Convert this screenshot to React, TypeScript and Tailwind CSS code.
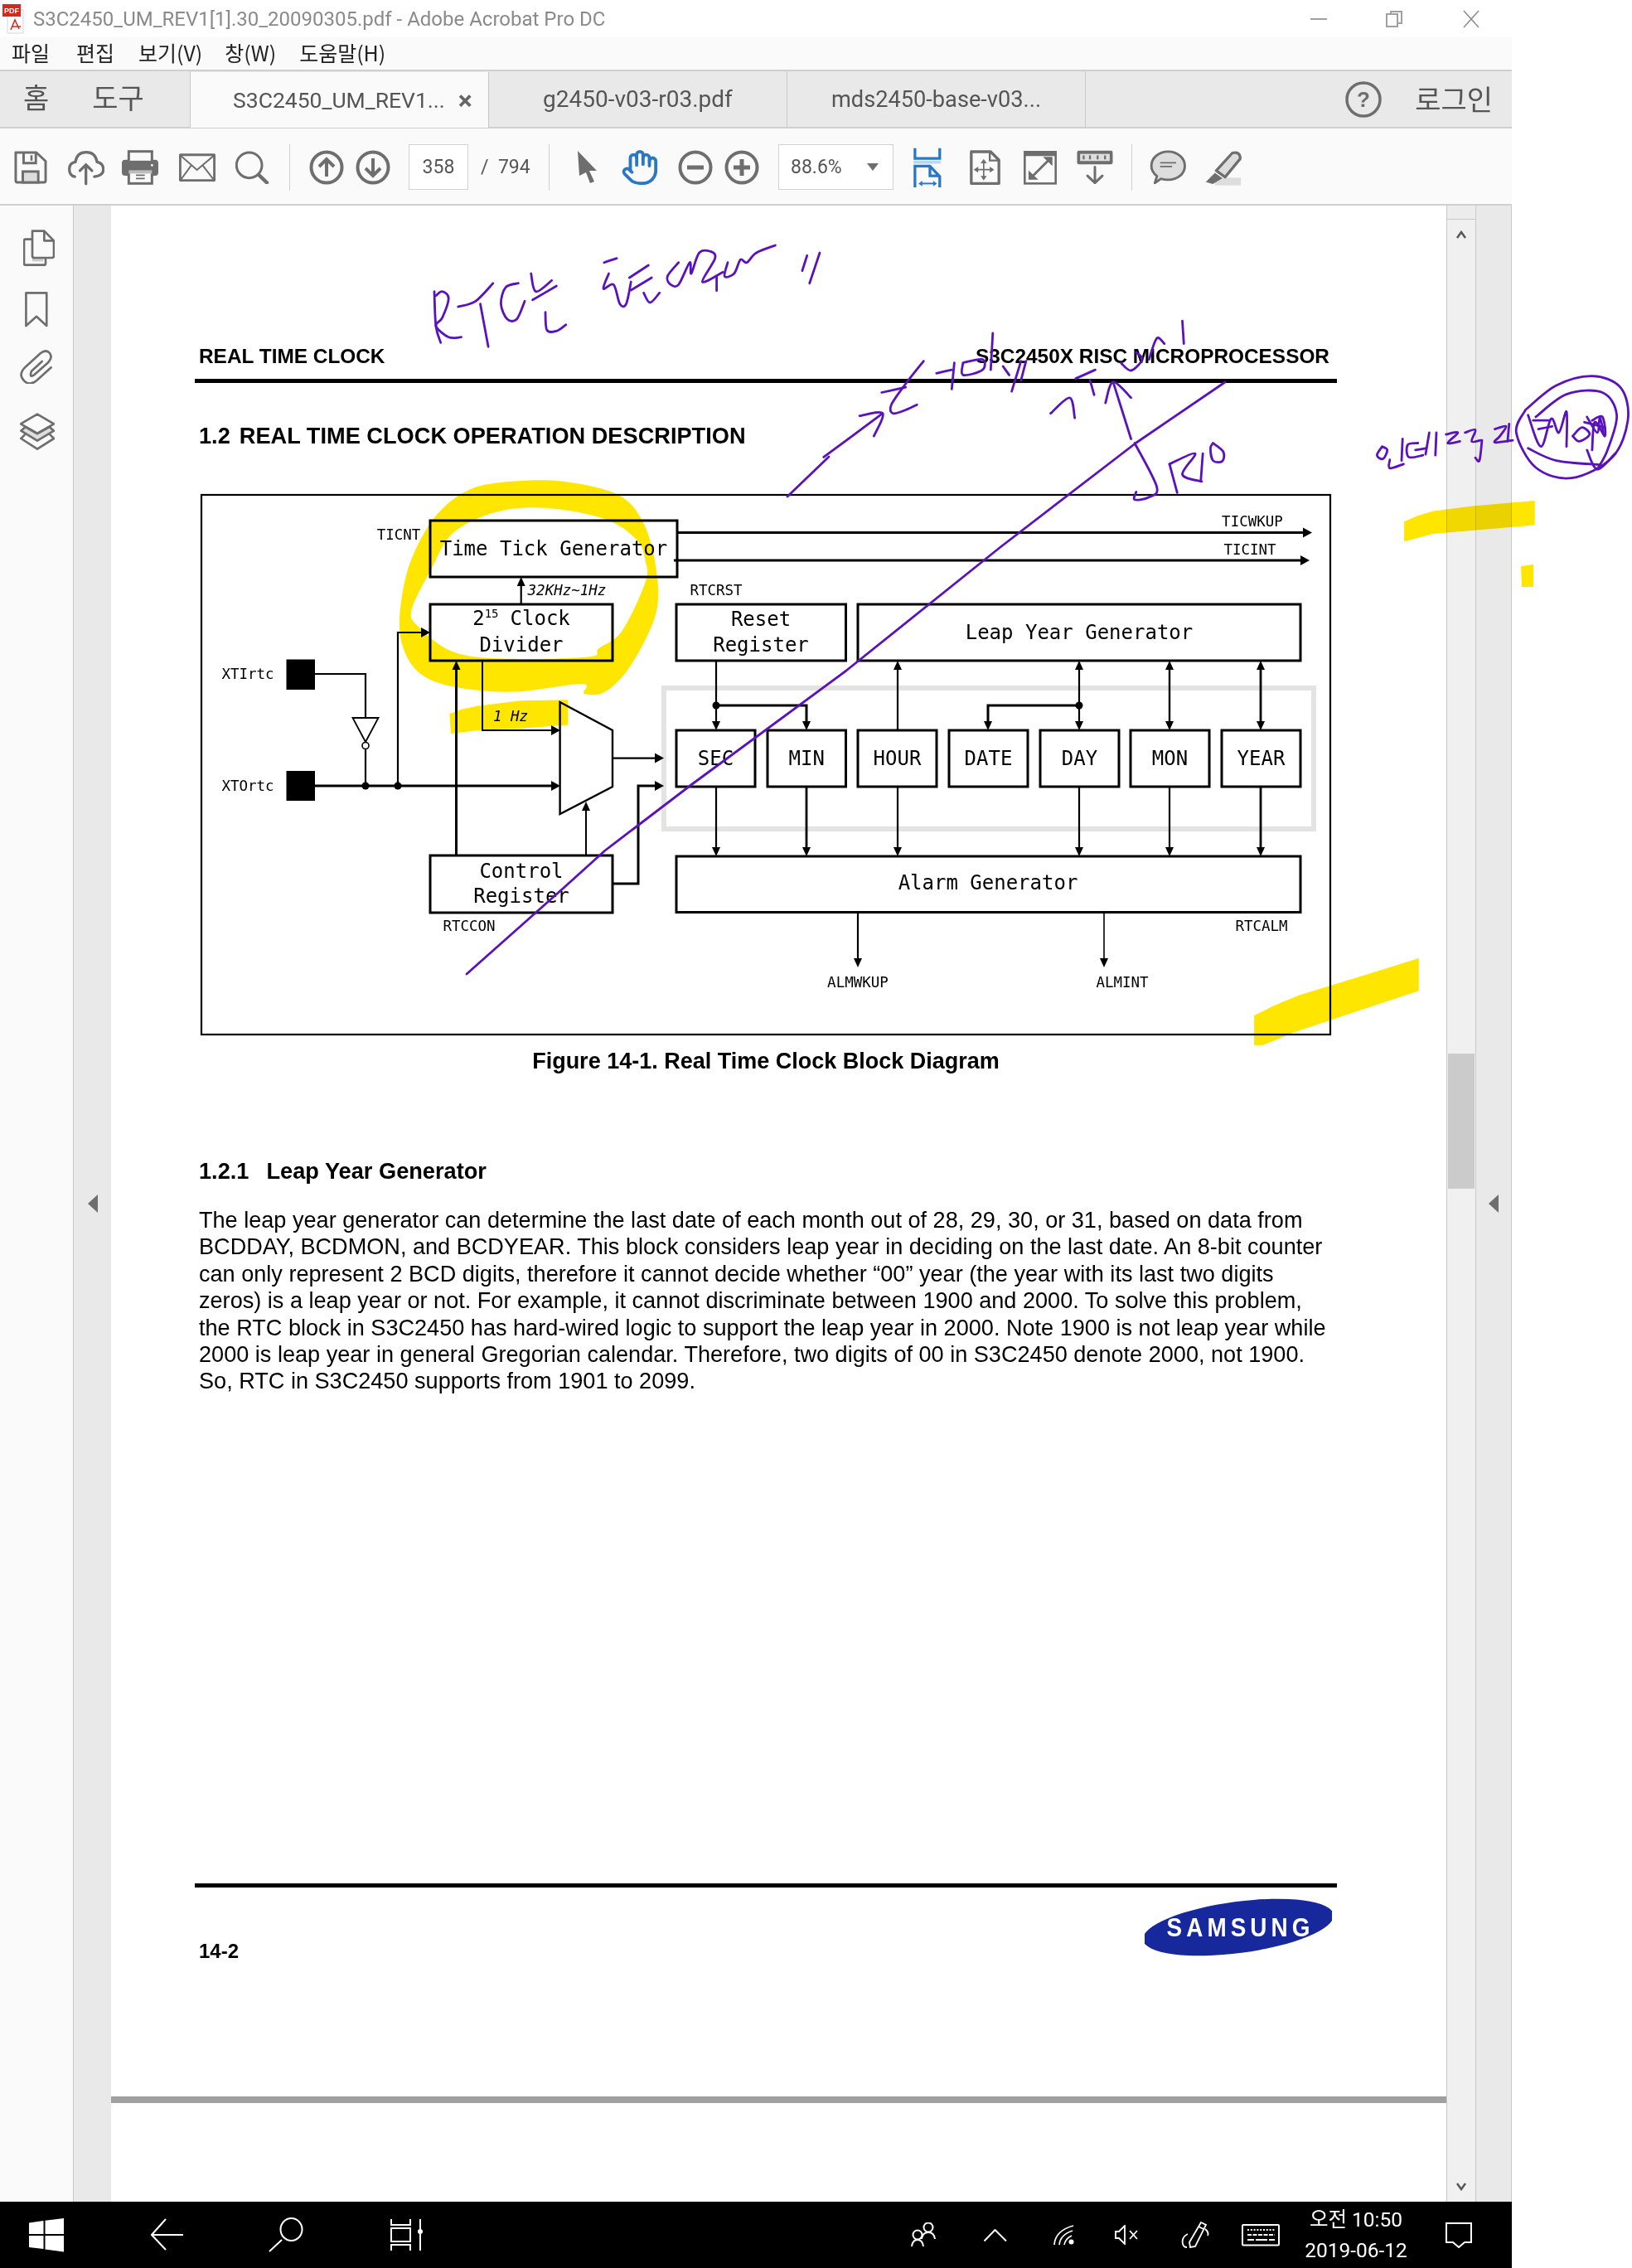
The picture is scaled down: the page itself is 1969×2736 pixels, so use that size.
import React from "react";
import { Hand } from "lucide-react";

type P = number[];
const smooth = (pts: P[], closed = false) => {
  const n = pts.length;
  const at = (i: number) => (closed ? pts[(i + n) % n] : pts[Math.max(0, Math.min(n - 1, i))]);
  let d = `M${pts[0][0].toFixed(1)} ${pts[0][1].toFixed(1)}`;
  const last = closed ? n : n - 1;
  for (let i = 0; i < last; i++) {
    const p0 = at(i - 1), p1 = at(i), p2 = at(i + 1), p3 = at(i + 2);
    const c1 = [p1[0] + (p2[0] - p0[0]) / 6, p1[1] + (p2[1] - p0[1]) / 6];
    const c2 = [p2[0] - (p3[0] - p1[0]) / 6, p2[1] - (p3[1] - p1[1]) / 6];
    d += `C${c1[0].toFixed(1)} ${c1[1].toFixed(1)} ${c2[0].toFixed(1)} ${c2[1].toFixed(1)} ${p2[0].toFixed(1)} ${p2[1].toFixed(1)}`;
  }
  return closed ? d + "Z" : d;
};
const poly = (pts: P[]) => "M" + pts.map((p) => p.map((v) => v.toFixed(1)).join(" ")).join("L") + "Z";
const z2 = (p: P): P => [1000 + p[0] / 1.618, p[1] / 2.376];
const z3 = (p: P): P => [220 + p[0] / 1.96, 580 + p[1] / 2.376];
const z4 = (p: P): P => [780 + p[0] / 1.6505, 580 + p[1] / 2.24];
const z9 = (p: P): P => [480 + p[0] / 2.613, 260 + p[1] / 3];

const rtcInk: P[][] = [
  [[115, 275], [120, 400], [135, 460]],
  [[120, 290], [140, 275], [160, 300], [140, 370], [120, 400], [160, 440], [200, 440]],
  [[190, 330], [245, 310], [300, 245]],
  [[260, 320], [285, 475]],
  [[380, 245], [340, 260], [325, 320], [345, 375], [375, 375], [400, 310]],
  [[420, 210], [435, 275], [485, 235]],
  [[425, 305], [500, 255]],
  [[465, 350], [470, 415], [500, 418], [530, 395]],
  [[650, 170], [690, 155]],
  [[665, 210], [648, 265], [680, 250], [700, 320], [720, 320], [735, 240]],
  [[730, 225], [790, 180]],
  [[735, 270], [800, 225]],
  [[775, 280], [795, 315], [825, 280]],
  [[885, 170], [850, 220], [860, 250], [885, 250], [920, 170], [925, 210], [950, 135], [985, 130], [1000, 155], [960, 240], [1025, 205]],
  [[1005, 220], [1005, 272]],
  [[1040, 170], [1030, 220], [1060, 210], [1080, 160], [1100, 170], [1130, 135], [1190, 108]],
  [[1290, 145], [1275, 200]],
  [[1330, 135], [1298, 245]],
];
const midInk: P[][] = [
  [[-10, 1310], [105, 1185]],
  [[60, 1192], [105, 1185], [88, 1250]],
  [[103, 1125], [150, 1110]],
  [[185, 1035], [150, 1100], [122, 1160], [125, 1185], [150, 1175], [172, 1160]],
  [[210, 1070], [240, 1060]],
  [[245, 1040], [240, 1115]],
  [[262, 1040], [262, 1075], [300, 1060], [300, 1030], [262, 1040]],
  [[320, 955], [316, 1060]],
  [[340, 1050], [352, 1075]],
  [[385, 1035], [375, 1090]],
  [[375, 1035], [357, 1122]],
  [[433, 1185], [470, 1140], [480, 1198]],
  [[482, 1085], [520, 1060]],
  [[510, 1090], [518, 1132]],
  [[540, 1155], [555, 1095], [590, 1140]],
  [[555, 1095], [590, 1258]],
  [[570, 1040], [590, 1062], [612, 1030], [600, 1010]],
  [[625, 1030], [640, 970], [655, 985]],
  [[690, 920], [693, 985]],
  [[597, 1270], [640, 1395], [625, 1425], [597, 1432], [600, 1410]],
  [[665, 1330], [680, 1412]],
  [[665, 1330], [715, 1300], [690, 1360], [728, 1380]],
  [[730, 1300], [726, 1380]],
  [[750, 1270], [770, 1295], [768, 1322], [750, 1320], [745, 1285], [750, 1270]],
  [[1080, 1280], [1070, 1305], [1082, 1315], [1090, 1290], [1080, 1280]],
  [[1120, 1258], [1118, 1320]],
  [[1095, 1318], [1095, 1342], [1122, 1330]],
  [[1150, 1270], [1130, 1275], [1132, 1310], [1160, 1305]],
  [[1145, 1290], [1165, 1285]],
  [[1172, 1240], [1165, 1302]],
  [[1186, 1240], [1184, 1305]],
  [[1205, 1245], [1228, 1240], [1208, 1270], [1232, 1265]],
  [[1242, 1240], [1262, 1232], [1255, 1265], [1272, 1262]],
  [[1275, 1262], [1270, 1320], [1262, 1312]],
  [[1300, 1230], [1322, 1222], [1310, 1250], [1300, 1268], [1335, 1262]],
  [[1328, 1215], [1325, 1265]],
  [[1360, 1175], [1420, 1105], [1490, 1078], [1545, 1110], [1560, 1200], [1530, 1310], [1450, 1370], [1380, 1340], [1342, 1240], [1360, 1175]],
  [[1380, 1195], [1440, 1130], [1510, 1125], [1538, 1190], [1520, 1290], [1500, 1345]],
  [[1365, 1285], [1420, 1320], [1505, 1332]],
  [[1365, 1190], [1390, 1280], [1410, 1200], [1425, 1240], [1440, 1180], [1440, 1280]],
  [[1375, 1205], [1405, 1205]],
  [[1385, 1230], [1412, 1222]],
  [[1452, 1250], [1470, 1225], [1485, 1245], [1465, 1265], [1452, 1250]],
  [[1490, 1205], [1510, 1195], [1515, 1250], [1495, 1210], [1490, 1290]],
  [[1475, 1210], [1515, 1225]],
  [[1480, 1195], [1500, 1240], [1505, 1195], [1512, 1240]],
  [[1480, 1290], [1500, 1345], [1535, 1300]],
];
const diagonal: P[] = [[1478, 461], [1371, 534], [1207, 660], [1021, 809], [835, 946], [730, 1026], [679, 1072], [563, 1175]];

const Yellow = () => {
  const fills = [
    [...[[950, 610], [1000, 605], [1060, 530], [1120, 380], [1120, 250], [1090, 120], [1030, 40], [900, 2], [780, 2], [680, 25], [600, 100], [540, 230], [515, 370], [520, 470], [560, 550], [640, 590], [780, 605], [945, 582]].map(z3)],
    [...[[985, 480], [1040, 430], [1095, 290], [1095, 230], [1075, 170], [1000, 110], [860, 78], [740, 90], [640, 150], [590, 250], [542, 370], [560, 420], [640, 490], [760, 510], [960, 505]].map(z3)],
  ];
  return (
    <svg width="1969" height="2736" className="absolute left-0 top-0 pointer-events-none mix-blend-multiply">
      <path d={smooth(fills[0], true) + smooth(fills[1], true)} fill="#ffe600" fillRule="evenodd" />
      <path d={poly([[632, 668], [660, 655], [700, 645], [800, 630], [912, 628], [912, 700], [800, 710], [700, 715], [635, 725]].map(z3))} fill="#ffe600" />
      <path d={poly([[1123, 1495], [1150, 1478], [1180, 1465], [1260, 1450], [1378, 1435], [1378, 1505], [1260, 1520], [1180, 1530], [1123, 1552]].map(z2))} fill="#ffe600" />
      <path d="M1835 683L1850 681V708H1836Z" fill="#ffe600" />
      <path d={poly([[1210, 1445], [1250, 1418], [1300, 1390], [1420, 1340], [1538, 1290], [1538, 1378], [1400, 1440], [1290, 1490], [1228, 1525], [1210, 1525]].map(z4))} fill="#ffe600" />
    </svg>
  );
};

const Ink = () => (
  <svg width="1969" height="2736" className="absolute left-0 top-0 pointer-events-none" fill="none" stroke="#5a12bd" strokeWidth="2.8" strokeLinecap="round" strokeLinejoin="round">
    {rtcInk.map((s, i) => <path key={i} d={smooth(s.map(z9))} />)}
    {midInk.map((s, i) => <path key={i} d={smooth(s.map(z2))} />)}
    <path d={"M" + diagonal.map((p) => p.join(" ")).join("L")} />
    <path d="M950 599L1000 551" />
  </svg>
);

/* Diagram helpers */
const Box = ({ x1, y1, x2, y2 }: { x1: number; y1: number; x2: number; y2: number }) => (
  <rect x={x1} y={y1} width={x2 - x1} height={y2 - y1} fill="none" stroke="#000" strokeWidth="3" />
);
const L = ({ d, w = 2.2 }: { d: string; w?: number }) => <path d={d} fill="none" stroke="#000" strokeWidth={w} />;
const Ah = ({ x, y, dir }: { x: number; y: number; dir: "u" | "d" | "r" }) => {
  const pts =
    dir === "u" ? `${x},${y} ${x - 5},${y + 11} ${x + 5},${y + 11}` :
    dir === "d" ? `${x},${y} ${x - 5},${y - 11} ${x + 5},${y - 11}` :
    `${x},${y} ${x - 11},${y - 6} ${x - 11},${y + 6}`;
  return <polygon points={pts} fill="#000" />;
};
const Dot = ({ x, y }: { x: number; y: number }) => <circle cx={x} cy={y} r="4.5" fill="#000" />;
const T = ({ x, y, s = 24, children, italic, a = "middle" }: { x: number; y: number; s?: number; children: React.ReactNode; italic?: boolean; a?: "middle" | "start" }) => (
  <text x={x} y={y} fontSize={s} textAnchor={a} fill="#000" fontStyle={italic ? "italic" : undefined}>{children}</text>
);

const Diagram = () => {
  const cols: [number, number, string][] = [[816, 911, "SEC"], [926, 1020.5, "MIN"], [1035, 1130, "HOUR"], [1145, 1240, "DATE"], [1255, 1350, "DAY"], [1364, 1459, "MON"], [1474, 1569, "YEAR"]];
  return (
    <svg width="1370" height="660" viewBox="241 595 1370 660" className="block ml-[6px] font-['DejaVu_Sans_Mono',monospace]">
      <rect x="243" y="597" width="1362" height="651" fill="none" stroke="#000" strokeWidth="2.2" />
      <rect x="801" y="830" width="784" height="170" fill="none" stroke="#e3e3e3" strokeWidth="6" />
      <Box x1={519} y1={628} x2={817} y2={696} />
      <Box x1={519} y1={729} x2={739} y2={797} />
      <Box x1={519} y1={1032} x2={739} y2={1101} />
      <Box x1={816} y1={729} x2={1020.5} y2={797} />
      <Box x1={1035} y1={729} x2={1569} y2={797} />
      <Box x1={816} y1={1033} x2={1569} y2={1100.5} />
      {cols.map(([a, b, t]) => <Box key={t} x1={a} y1={881} x2={b} y2={949} />)}
      {cols.map(([a, b, t]) => <T key={t} x={(a + b) / 2} y={923}>{t}</T>)}
      <T x={668} y={670}>Time Tick Generator</T>
      <T x={629} y={754}>2<tspan fontSize="14" dy="-9">15</tspan><tspan dy="9" dx="14">Clock</tspan></T>
      <T x={629} y={786}>Divider</T>
      <T x={629} y={1059}>Control</T>
      <T x={629} y={1089}>Register</T>
      <T x={918} y={755}>Reset</T>
      <T x={918} y={786}>Register</T>
      <T x={1302} y={771}>Leap Year Generator</T>
      <T x={1192} y={1073}>Alarm Generator</T>
      <T x={481} y={651} s={17.5}>TICNT</T>
      <T x={1511} y={635} s={17.5}>TICWKUP</T>
      <T x={1508} y={669} s={17.5}>TICINT</T>
      <T x={864} y={718} s={17.5}>RTCRST</T>
      <T x={1522} y={1123} s={17.5}>RTCALM</T>
      <T x={1035} y={1191} s={17.5}>ALMWKUP</T>
      <T x={1354} y={1191} s={17.5}>ALMINT</T>
      <T x={299} y={819} s={17.5}>XTIrtc</T>
      <T x={299} y={954} s={17.5}>XTOrtc</T>
      <T x={566} y={1123} s={17.5}>RTCCON</T>
      <T x={684} y={718} s={17.5} italic>32KHz~1Hz</T>
      <T x={616} y={870} s={17.5} italic>1 Hz</T>
      <rect x="345.5" y="795.5" width="34.5" height="36.5" fill="#000" />
      <rect x="345.5" y="930" width="34.5" height="36" fill="#000" />
      <L d="M380 813H441V866" />
      <polygon points="425.5,866 456.5,866 441,895" fill="none" stroke="#000" strokeWidth="1.8" />
      <circle cx="441" cy="899.5" r="4" fill="#fff" stroke="#000" strokeWidth="1.6" />
      <L d="M441 904V948" />
      <L d="M380 948H665" w={3} /><Ah x={676} y={948} dir="r" />
      <Dot x={441} y={948} /><Dot x={480} y={948} />
      <L d="M480 948V763H509" /><Ah x={519} y={763} dir="r" />
      <L d="M550.5 1032V808" w={3} /><Ah x={550.5} y={797} dir="u" />
      <L d="M582 797V881H665" w={2} /><Ah x={676} y={881} dir="r" />
      <L d="M628.7 729V706" /><Ah x={628.7} y={696} dir="u" />
      <polygon points="675.6,847 739,881 739,949 675.6,982" fill="none" stroke="#000" strokeWidth="2.4" />
      <L d="M739 914.6H790" /><Ah x={801} y={914.6} dir="r" />
      <L d="M739 1066H770V948H790" w={3} /><Ah x={801} y={948} dir="r" />
      <L d="M707 1032V978" w={2} /><Ah x={707} y={967} dir="u" />
      <L d="M817 642.5H1572" w={3} /><Ah x={1583} y={642.5} dir="r" />
      <L d="M813 676H1570" w={3} /><Ah x={1580} y={676} dir="r" />
      <L d="M864 797V870" /><Ah x={864} y={881} dir="d" />
      <Dot x={864} y={851} />
      <L d="M864 851H973V870" w={3} /><Ah x={973} y={881} dir="d" />
      <L d="M1083 881V808" /><Ah x={1083} y={797} dir="u" />
      <L d="M1302 808V870" /><Ah x={1302} y={797} dir="u" /><Ah x={1302} y={881} dir="d" />
      <Dot x={1302} y={851} />
      <L d="M1302 851H1192V870" w={3} /><Ah x={1192} y={881} dir="d" />
      <L d="M1411 808V870" w={2.4} /><Ah x={1411} y={797} dir="u" /><Ah x={1411} y={881} dir="d" />
      <L d="M1521 808V870" w={2.8} /><Ah x={1521} y={797} dir="u" /><Ah x={1521} y={881} dir="d" />
      {[864, 973, 1083, 1302, 1411, 1521].map((x) => (
        <g key={x}><L d={`M${x} 949V1022`} w={x === 973 || x === 1521 ? 2.8 : 2.2} /><Ah x={x} y={1033} dir="d" /></g>
      ))}
      <L d="M1035 1100V1156" /><Ah x={1035} y={1167} dir="d" />
      <L d="M1332 1100V1156" w={1.6} /><Ah x={1332} y={1167} dir="d" />
    </svg>
  );
};

const Logo = () => (
  <svg width="226" height="72" viewBox="0 0 226 72" className="block mr-[6px] font-['Liberation_Sans',sans-serif]">
    <ellipse cx="113" cy="36" rx="116" ry="31" transform="rotate(-7.5 113 36)" fill="#16289b" />
    <text transform="translate(113 47) scale(0.9 1)" x="0" y="0" fontSize="31" fontWeight="700" fill="#fff" textAnchor="middle" textLength="192" lengthAdjust="spacing">SAMSUNG</text>
  </svg>
);

const G = "#6e6e6e";
const B = "#2b78c2";

const Sep = ({ ml }: { ml: string }) => <div className={`w-px h-[56px] bg-[#d0d0d0] ${ml}`} />;

const CircleBtn = ({ kind, cls }: { kind: "up" | "down" | "minus" | "plus"; cls: string }) => (
  <svg width="42" height="42" viewBox="0 0 42 42" className={cls} fill="none" stroke={G}>
    <circle cx="21" cy="21" r="18.5" strokeWidth="4" />
    {kind === "up" && <path d="M21 32V11M12 20L21 11L30 20" strokeWidth="4" />}
    {kind === "down" && <path d="M21 10V31M12 22L21 31L30 22" strokeWidth="4" />}
    {kind === "minus" && <path d="M11 21H31" strokeWidth="5" />}
    {kind === "plus" && <path d="M11 21H31M21 11V31" strokeWidth="5" />}
  </svg>
);

const Toolbar = () => (
  <div className="h-[93px] flex items-center bg-[#fafafa] border-b-2 border-[#cfcfcf] pl-[17px] pt-[2px] text-[#555] font-['Roboto',sans-serif]">
    <svg width="40" height="40" viewBox="50 50 122 122" fill="none" stroke={G} strokeWidth="9">
      <path d="M56 56H132L166 88V160Q166 166 160 166H62Q56 166 56 160Z" strokeLinejoin="round" />
      <path d="M85 56V95H130V56" />
      <rect x="110" y="66" width="8" height="20" fill={G} stroke="none" />
      <rect x="82" y="126" width="57" height="40" fill="#ddd" />
    </svg>
    <svg width="44" height="44" viewBox="245 45 134 134" className="ml-[25px]" fill="none" stroke={G} strokeWidth="10" strokeLinecap="round">
      <path d="M270 146Q250 142 250 118Q250 96 272 92Q278 56 312 56Q346 56 352 92Q375 96 375 120Q375 142 342 146" />
      <path d="M311 172V102M289 124L311 102L333 124" />
    </svg>
    <svg width="44" height="42" viewBox="441 45 132 126" className="ml-[21px]" fill="none" stroke={G} strokeWidth="9">
      <rect x="441" y="80" width="132" height="58" rx="12" fill={G} stroke="none" />
      <rect x="466" y="50" width="84" height="38" fill="#fafafa" />
      <rect x="466" y="118" width="84" height="48" fill="#fafafa" />
      <rect x="466" y="118" width="84" height="12" fill="#bdbdbd" stroke="none" />
      <path d="M492 136H524M492 148H524" strokeWidth="5" />
      <circle cx="550" cy="100" r="4" fill="#fff" stroke="none" />
    </svg>
    <svg width="44" height="34" viewBox="648 56 132 102" className="ml-[25px]" fill="none" stroke={G} strokeWidth="9">
      <rect x="652" y="61" width="124" height="93" rx="3" />
      <path d="M654 64L713 116L774 64M654 152L692 100M774 152L734 100" strokeWidth="6" />
    </svg>
    <svg width="41" height="40" viewBox="852 50 123 120" className="ml-[24px]" fill="none" stroke={G}>
      <circle cx="902" cy="102" r="46" strokeWidth="9" />
      <path d="M938 138L966 165" strokeWidth="13" strokeLinecap="round" />
    </svg>
    <Sep ml="ml-[24px]" />
    <CircleBtn kind="up" cls="ml-[23px]" />
    <CircleBtn kind="down" cls="ml-[14px]" />
    <div className="ml-[22px] w-[72px] h-[55px] flex items-center justify-center border border-[#d2d2d2] bg-white text-[23px] pt-[2px]">358</div>
    <div className="ml-[15px] w-[62px] text-[23px] whitespace-nowrap pt-[2px]">/&nbsp;&nbsp;794</div>
    <Sep ml="ml-[20px]" />
    <svg width="25" height="39" viewBox="0 0 25 39" className="ml-[33px]"><path d="M1 0L24 24H15L21 37L16 39L11 26L3 30Z" fill={G} /></svg>
    <Hand size={46} color={B} strokeWidth={2} className="ml-[28px]" />
    <CircleBtn kind="minus" cls="ml-[23px]" />
    <CircleBtn kind="plus" cls="ml-[14px]" />
    <div className="ml-[23px] w-[139px] h-[55px] flex items-center justify-between pl-[14px] pr-[17px] border border-[#d2d2d2] bg-white text-[23px]">
      <span className="pt-[2px]">88.6%</span>
      <span className="w-0 h-0 border-l-[7px] border-r-[7px] border-t-[9px] border-l-transparent border-r-transparent border-t-[#6e6e6e]" />
    </div>
    <svg width="34" height="48" viewBox="40 38 102 146" className="ml-[24px]" fill="none" stroke={B} strokeWidth="10">
      <path d="M45 40V78H136V40" />
      <rect x="40" y="86" width="100" height="11" fill="#bcd6ee" stroke="none" />
      <path d="M45 184V106H100L136 144V184M100 106V142H136" />
      <path d="M66 170H118" strokeWidth="6" />
      <path d="M58 170L72 160V180ZM126 170L112 160V180Z" fill={B} stroke="none" />
    </svg>
    <svg width="37" height="42" viewBox="240 44 110 126" className="ml-[34px]" fill="none" stroke={G} strokeWidth="10">
      <path d="M245 50H315L345 80V165H245Z" strokeLinejoin="round" />
      <path d="M312 50V82H345" strokeWidth="7" />
      <path d="M290 90V140M262 115H318" strokeWidth="5" />
      <path d="M290 76L279 92H301ZM290 154L279 138H301ZM254 115L270 104V126ZM328 115L312 104V126Z" fill={G} stroke="none" />
    </svg>
    <svg width="40" height="42" viewBox="434 44 122 126" className="ml-[28px]" fill="none" stroke={G} strokeWidth="8">
      <rect x="438" y="50" width="114" height="116" />
      <path d="M438 58H552" strokeWidth="14" />
      <path d="M458 148L534 72" strokeWidth="9" />
      <path d="M540 68H505L540 102ZM452 152H488L452 118Z" fill={G} stroke="none" />
    </svg>
    <svg width="44" height="41" viewBox="630 50 132 124" className="ml-[24px]" fill="none" stroke={G}>
      <rect x="631" y="52" width="130" height="50" rx="7" fill={G} stroke="none" />
      <rect x="642" y="64" width="108" height="26" fill="#ddd" stroke="none" />
      <path d="M655 70V84M678 70V84M706 70V84M733 70V84" strokeWidth="7" />
      <path d="M696 112V170M669 144L696 170L723 144" strokeWidth="9" strokeLinecap="round" />
    </svg>
    <Sep ml="ml-[22px]" />
    <svg width="46" height="41" viewBox="890 48 138 128" className="ml-[20px]" fill="none" stroke={G}>
      <path d="M960 54C995 54 1023 78 1023 108C1023 138 995 160 960 160Q945 160 933 156L910 172L918 146C905 136 897 124 897 108C897 78 925 54 960 54Z" fill="#ddd" strokeWidth="9" strokeLinejoin="round" />
      <path d="M930 96H990M930 110H975" strokeWidth="5" />
    </svg>
    <svg width="45" height="44" viewBox="1092 42 136 136" className="ml-[21px]" fill="none" stroke={G}>
      <rect x="1130" y="148" width="97" height="29" fill="#ddd" stroke="none" />
      <path d="M1195 56L1135 122L1168 146L1224 78Q1226 50 1195 56Z" fill="#ddd" strokeWidth="10" strokeLinejoin="round" />
      <path d="M1130 130L1096 164L1122 172L1158 150Z" fill={G} stroke="none" />
    </svg>
  </div>
);

const Tab = ({ children, active, cls, extra }: { children: React.ReactNode; active?: boolean; cls: string; extra?: React.ReactNode }) => (
  <div className={`w-[360px] h-full flex items-center whitespace-nowrap border-r border-[#c8c8c8] ${cls} ${active ? "bg-[#fafafa] -mb-px" : ""}`}>
    {children}{extra}
  </div>
);

const Left = () => (
  <div className="w-[89px] h-full bg-[#fafafa] border-r border-[#c8c8c8] flex flex-col pl-[24px] pt-[29px]">
    <svg width="38" height="44" viewBox="84 110 114 132" className="ml-[4px]" fill="none" stroke={G} strokeWidth="8" strokeLinejoin="round">
      <rect x="117" y="212" width="40" height="13" fill="#ccc" stroke="none" />
      <path d="M117 145H92Q87 145 87 151V232Q87 238 93 238H158Q165 238 165 232V212" />
      <path d="M117 115H160L195 150V205Q195 212 188 212H124Q117 212 117 205Z" fill="none" />
      <path d="M160 115V150H195" />
    </svg>
    <svg width="28" height="43" viewBox="90 335 84 130" className="ml-[6px] mt-[31px]" fill="none" stroke={G} strokeWidth="8" strokeLinejoin="round">
      <path d="M94 339H169V459L132 425L94 459Z" />
    </svg>
    <svg width="40" height="41" viewBox="70 548 120 123" className="mt-[27px]" fill="none" stroke={G} strokeWidth="8" strokeLinecap="round">
      <path d="M183 612L130 660Q105 680 85 660Q62 638 90 610L145 560Q165 545 178 560Q190 577 170 596L120 640Q103 650 112 625L150 590" />
    </svg>
    <svg width="42" height="45" viewBox="72 777 126 135" className="mt-[35px]" fill="none" stroke={G} strokeWidth="8" strokeLinejoin="round">
      <path d="M92 828L76 842L135 878L195 842L179 828L135 852Z" fill="#ddd" />
      <path d="M135 782L195 817L135 852L75 817Z" />
      <path d="M92 854L76 870L135 908L195 870L179 854" />
    </svg>
  </div>
);

const Taskbar = () => (
  <div className="h-[80px] bg-black flex items-center relative text-white font-['Roboto','Noto_Sans_CJK_KR',sans-serif]">
    <svg width="42" height="41" viewBox="35 2676 42 41" className="ml-[35px]" fill="#fff">
      <path d="M35 2681.5L52.5 2679V2695H35ZM54.5 2678.7L77 2676V2695H54.5ZM35 2697H52.5V2713L35 2711ZM54.5 2697H77V2716.5L54.5 2713.5Z" />
    </svg>
    <svg width="40" height="40" viewBox="181 2676 40 40" className="ml-[105px]" fill="none" stroke="#fff" strokeWidth="2">
      <path d="M199 2677L182 2696L199 2714M182 2696H220" />
    </svg>
    <svg width="42" height="42" viewBox="323 2675 42 42" className="ml-[102px]" fill="none" stroke="#fff" strokeWidth="2">
      <ellipse cx="350.5" cy="2689.5" rx="13" ry="13.5" />
      <path d="M339 2702L324 2716" />
    </svg>
    <svg width="41" height="40" viewBox="468 2676 41 40" className="ml-[104px]" fill="none" stroke="#fff" strokeWidth="2">
      <path d="M470 2677V2684H493V2677M470 2715V2708H493V2715" />
      <rect x="470" y="2688" width="23" height="16" />
      <path d="M505 2677V2715" />
      <circle cx="505" cy="2692" r="3" fill="#fff" stroke="none" />
    </svg>
    <svg width="30" height="30" viewBox="1100 2682 30 30" className="ml-[588px]" fill="none" stroke="#fff" strokeWidth="2">
      <circle cx="1121" cy="2688" r="5.5" /><path d="M1113 2702Q1114 2694 1121 2694Q1128 2694 1129 2702" />
      <circle cx="1108" cy="2697" r="5.5" /><path d="M1101 2711Q1102 2703 1108 2703Q1114 2703 1115 2711" />
    </svg>
    <svg width="28" height="15" viewBox="1188 2689 28 15" className="ml-[58px]" fill="none" stroke="#fff" strokeWidth="2">
      <path d="M1188.5 2703.5L1201.5 2690L1215 2703.5" />
    </svg>
    <svg width="26" height="25" viewBox="1272 2686 26 25" className="ml-[56px]" fill="none" stroke="#fff" strokeWidth="1.7">
      <path d="M1273 2710Q1274 2693 1296 2687M1279 2710Q1280 2698 1295 2693M1285 2710Q1286 2703 1294 2699" />
      <circle cx="1293.5" cy="2706.5" r="3" fill="#fff" stroke="none" />
    </svg>
    <svg width="29" height="24" viewBox="1346 2684 29 24" className="ml-[48px]" fill="none" stroke="#fff" strokeWidth="1.8">
      <path d="M1347 2692H1351L1358 2685V2707L1351 2700H1347Z" />
      <path d="M1364 2691L1373 2701M1373 2691L1364 2701" />
    </svg>
    <svg width="34" height="32" viewBox="1426 2681 34 32" className="ml-[51px]" fill="none" stroke="#fff" strokeWidth="1.8">
      <path d="M1450 2682L1456 2685L1443 2711L1437 2712L1436 2706Z" />
      <path d="M1447 2687L1453 2690" />
      <path d="M1434 2696Q1426 2700 1428 2708Q1429 2712 1433 2712M1455 2690Q1460 2694 1458 2698" />
    </svg>
    <svg width="47" height="27" viewBox="1499 2683 47 27" className="ml-[39px]" fill="none" stroke="#fff">
      <rect x="1500" y="2684" width="44" height="24.5" rx="1" strokeWidth="2" />
      <path d="M1506 2690H1539" strokeWidth="2" strokeDasharray="2 1.8" />
      <path d="M1506 2696H1539" strokeWidth="2" strokeDasharray="5 1.5" />
      <path d="M1506 2702H1514M1516 2702H1530M1532 2702H1539" strokeWidth="2" />
    </svg>
    <div className="ml-[28px] w-[126px] flex flex-col items-center text-[24.5px] leading-[37px] whitespace-nowrap">
      <span>오전 10:50</span>
      <span>2019-06-12</span>
    </div>
    <svg width="32" height="31" viewBox="1745 2681 32 31" className="ml-[45px]" fill="none" stroke="#fff" strokeWidth="2">
      <path d="M1746 2682H1776V2705H1768L1761 2711L1754 2705H1746Z" />
    </svg>
  </div>
);

const para = [
  "The leap year generator can determine the last date of each month out of 28, 29, 30, or 31, based on data from",
  "BCDDAY, BCDMON, and BCDYEAR. This block considers leap year in deciding on the last date. An 8-bit counter",
  "can only represent 2 BCD digits, therefore it cannot decide whether “00” year (the year with its last two digits",
  "zeros) is a leap year or not. For example, it cannot discriminate between 1900 and 2000. To solve this problem,",
  "the RTC block in S3C2450 has hard-wired logic to support the leap year in 2000. Note 1900 is not leap year while",
  "2000 is leap year in general Gregorian calendar. Therefore, two digits of 00 in S3C2450 denote 2000, not 1900.",
  "So, RTC in S3C2450 supports from 1901 to 2099.",
];

const Page = () => (
  <div className="flex-1 h-full bg-white text-black font-['Liberation_Sans',sans-serif] whitespace-nowrap">
    <div className="ml-[101px] w-[1378px]">
      <div className="mt-[168px] flex justify-between pl-[5px] pr-[9px] text-[24.4px] leading-[28px] font-bold">
        <span>REAL TIME CLOCK</span>
        <span>S3C2450X RISC MICROPROCESSOR</span>
      </div>
      <div className="mt-[13px] h-[5px] bg-black" />
      <h2 className="mt-[48px] pl-[5px] text-[27.2px] leading-[32px] font-bold">1.2<span className="ml-[11px]">REAL TIME CLOCK OPERATION DESCRIPTION</span></h2>
      <div className="mt-[53px]"><Diagram /></div>
      <div className="mt-[9px] text-center text-[27px] leading-[32px] font-bold">Figure 14-1. Real Time Clock Block Diagram</div>
      <h3 className="mt-[101px] pl-[5px] text-[27.2px] leading-[32px] font-bold">1.2.1<span className="ml-[21px]">Leap Year Generator</span></h3>
      <div className="mt-[27px] pl-[5px] text-[27.1px] leading-[32.4px]">
        {para.map((l) => <div key={l}>{l}</div>)}
      </div>
      <div className="mt-[589px] h-[5px] bg-black" />
      <div className="mt-[12px] flex justify-between items-start pl-[5px]">
        <span className="mt-[51px] text-[24px] leading-[28px] font-bold">14-2</span>
        <Logo />
      </div>
    </div>
    <div className="mt-[161px] h-[8px] bg-[#a0a0a0]" />
  </div>
);

export default function App() {
  return (
    <div className="relative isolate w-[1969px] h-[2736px] bg-white overflow-hidden font-['Noto_Sans_CJK_KR',sans-serif]">
      <div className="w-[1824px] h-full flex flex-col">
        <div className="h-[45px] bg-white flex items-center relative">
          <svg width="36" height="36" viewBox="0 0 36 36" className="ml-[3px] shrink-0">
            <path d="M6 7H25V35H6Z" fill="#fff" stroke="#d5d5d5" />
            <rect x="0" y="0" width="22" height="15" fill="#d8281c" />
            <text x="11" y="11" fontSize="9" fontWeight="700" fill="#fff" textAnchor="middle" className="font-['Liberation_Sans',sans-serif]">PDF</text>
            <path d="M10 31L15 19L20 30M12 27H22" fill="none" stroke="#d8281c" strokeWidth="1.5" />
          </svg>
          <span className="ml-px text-[24px] text-[#8a8a8a] whitespace-nowrap font-['Roboto',sans-serif]">S3C2450_UM_REV1[1].30_20090305.pdf - Adobe Acrobat Pro DC</span>
          <div className="absolute right-0 top-0 h-full flex items-center">
            <div className="w-[20px] h-[2px] bg-[#a0a0a0] mr-[71px]" />
            <svg width="20" height="20" viewBox="0 0 20 20" className="mr-[73px]" fill="none" stroke="#a0a0a0" strokeWidth="2"><path d="M6 4V1H19V15H14" /><rect x="1" y="4" width="13" height="15" /></svg>
            <svg width="20" height="22" viewBox="0 0 20 22" className="mr-[39px]" fill="none" stroke="#8f8f8f" strokeWidth="1.6"><path d="M1 1L19 21M19 1L1 21" /></svg>
          </div>
        </div>
        <div className="h-[39px] bg-[#fafafa] flex items-center text-[25px] text-[#222] pb-[2px]">
          <span className="ml-[14px]">파일</span>
          <span className="ml-[32px]">편집</span>
          <span className="ml-[29px]">보기(V)</span>
          <span className="ml-[27px]">창(W)</span>
          <span className="ml-[28px]">도움말(H)</span>
        </div>
        <div className="h-[71px] bg-[#e9e9e9] border-y-2 border-[#cfcfcf] flex items-center text-[#555] font-['Roboto','Noto_Sans_CJK_KR',sans-serif] text-[28px]">
          <div className="w-[230px] h-full flex items-center border-r border-[#c8c8c8] text-[34px]">
            <span className="ml-[28px]">홈</span>
            <span className="ml-[52px]">도구</span>
          </div>
          <Tab active cls="pl-[51px] text-[26.5px] pt-[1px]" extra={<span className="ml-[16px] font-bold text-[32px] text-[#666]">×</span>}>S3C2450_UM_REV1...</Tab>
          <Tab cls="pl-[65px] pt-[1px]">g2450-v03-r03.pdf</Tab>
          <Tab cls="pl-[53px] text-[27.2px] pt-[1px]">mds2450-base-v03...</Tab>
          <div className="ml-auto flex items-center">
            <svg width="44" height="44" viewBox="0 0 44 44" fill="none" stroke={G}>
              <circle cx="22" cy="22" r="20" strokeWidth="3.5" />
              <text x="22" y="31" textAnchor="middle" fontSize="26" fontWeight="700" fill={G} stroke="none" className="font-['Liberation_Sans',sans-serif]">?</text>
            </svg>
            <span className="ml-[40px] mr-[23px] pt-[3px] text-[34px] text-[#555]">로그인</span>
          </div>
        </div>
        <Toolbar />
        <div className="flex-1 flex min-h-0">
          <Left />
          <div className="w-[45px] h-full bg-[#e9e9e9] flex items-center justify-center">
            <span className="w-0 h-0 border-y-[11px] border-r-[12px] border-y-transparent border-r-[#6e6e6e]" />
          </div>
          <Page />
          <div className="w-[36px] h-full flex flex-col bg-[#f0f0f0] border-x border-[#c8c8c8]">
            <div className="h-[17px] bg-[#ececec] border-b border-[#c8c8c8]" />
            <div className="flex justify-center mt-[13px]">
              <svg width="12" height="10" viewBox="0 0 12 10" fill="none" stroke="#555" strokeWidth="2.5"><path d="M1 9L6 2L11 9" /></svg>
            </div>
            <div className="mt-[983px] h-[163px] mx-px bg-[#cbcbcb]" />
            <div className="mt-auto mb-[13px] flex justify-center">
              <svg width="12" height="10" viewBox="0 0 12 10" fill="none" stroke="#555" strokeWidth="2.5"><path d="M1 1L6 8L11 1" /></svg>
            </div>
          </div>
          <div className="w-[43px] h-full bg-[#e9e9e9] border-r border-[#c8c8c8] flex items-center justify-center">
            <span className="w-0 h-0 border-y-[11px] border-r-[12px] border-y-transparent border-r-[#6e6e6e]" />
          </div>
        </div>
        <Taskbar />
      </div>
      <Yellow />
      <Ink />
    </div>
  );
}
